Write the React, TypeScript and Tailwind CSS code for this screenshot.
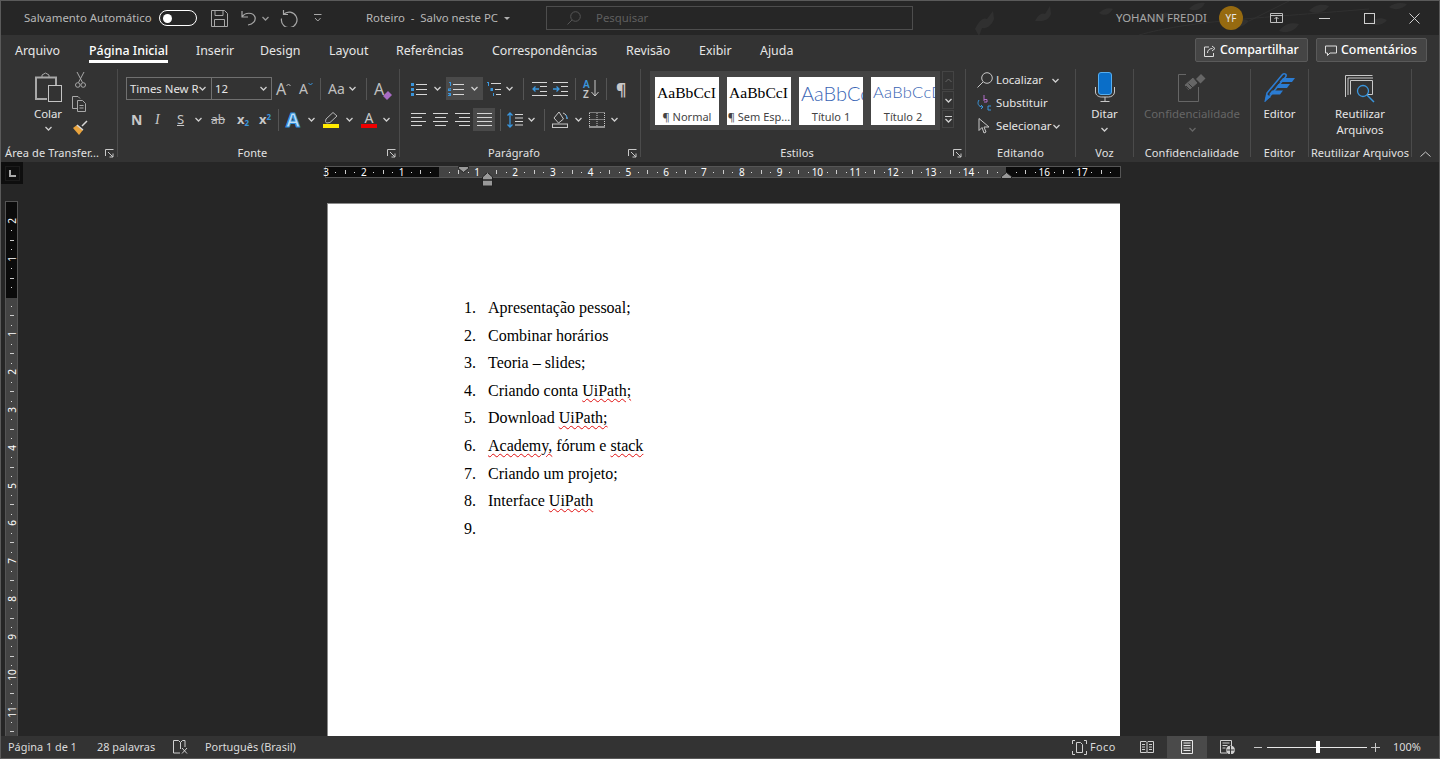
import React from 'react';

const Chev = ({ className = '', color = '#cfcfcf' }: { className?: string; color?: string }) => (
  <svg width="7" height="5" viewBox="0 0 7 5" fill="none" className={`shrink-0 ${className}`}>
    <path d="M.5 1 3.5 4 6.5 1" stroke={color} strokeWidth="1.3" />
  </svg>
);

const Sep = ({ className = '' }: { className?: string }) => <div className={`w-px h-[22px] bg-[#555] shrink-0 ${className}`} />;

const Launcher = () => (
  <svg width="9" height="9" viewBox="0 0 9 9" fill="none" className="shrink-0 mr-[3px]">
    <path d="M.5 7V.5H8.5M3 3 8 8M8 4.5V8H4.5" stroke="#c8c8c8" />
  </svg>
);

const Group = ({
  w,
  label,
  launcher,
  labelClass = 'text-center',
  children,
}: {
  w: string;
  label: string;
  launcher?: boolean;
  labelClass?: string;
  children: React.ReactNode;
}) => (
  <div className={`flex shrink-0 ${w}`}>
    <div className="flex flex-col flex-1 min-w-0 h-[93px]">
      <div className="h-[76px]">{children}</div>
      <div className="h-[16px] flex items-center text-[11px] text-[#e2e2e2] tracking-[0.1px]">
        <div className={`flex-1 whitespace-nowrap ${labelClass}`}>{label}</div>
        {launcher && <Launcher />}
      </div>
    </div>
    <div className="w-px h-[88px] bg-[#4b4b4b]" />
  </div>
);

const Row = ({ className = '', children }: { className?: string; children: React.ReactNode }) => (
  <div className={`flex items-center h-[23px] ${className}`}>{children}</div>
);

const L = '#d6d6d6';
const B = '#3a96dd';

const ListBullet = () => (
  <svg width="16" height="16" viewBox="0 0 16 16" className="shrink-0">
    <path d="M0 2h3v3H0zM0 7h3v3H0zM0 12h3v3H0z" fill={B} />
    <path d="M5 3.5h11M5 8.5h11M5 13.5h11" stroke={L} />
  </svg>
);
const ListNumber = () => (
  <svg width="16" height="16" viewBox="0 0 16 16" className="shrink-0">
    <path d="M1 1h2v4H2V2H1zM0 7h3v1.5H1.2V9H3v1H0V8h1.8v-.4H0zM0 12h3v3H0v-1h2v-.3H1v-.7h1V13H0z" fill={B} />
    <path d="M5 3.5h11M5 8.5h11M5 13.5h11" stroke={L} />
  </svg>
);
const ListMulti = () => (
  <svg width="15" height="16" viewBox="0 0 15 16" className="shrink-0">
    <path d="M1 1h2v4H2V2H1zM4.500 7h2.500v3H4.500z" fill={B} />
    <path d="M7.500 12v3" stroke={B} />
    <path d="M5 2.500h10M9 8.500h6M10 13.500h5" stroke={L} />
  </svg>
);
const Indent = ({ out }: { out?: boolean }) => (
  <svg width="15" height="14" viewBox="0 0 15 14" className="shrink-0">
    <path d="M0 .5h15M0 13.500h15M8 4.500h7M8 9.500h7" stroke={L} />
    <path d={out ? 'M7 7H1M3.500 4.500 1 7l2.500 2.500' : 'M0 7h6M3.500 4.500 6 7 3.500 9.500'} stroke={B} strokeWidth="1.300" fill="none" />
  </svg>
);
const Align = ({ d, w = 15 }: { d: string; w?: number }) => (
  <svg width={w} height="14" viewBox={`0 0 ${w} 14`} className="shrink-0">
    <path d={d} stroke={L} />
  </svg>
);

const Tile = ({ top, label, cls }: { top: string; label: string; cls: string }) => (
  <div className="w-[64px] h-[48px] bg-white flex flex-col overflow-hidden">
    <div className={`h-[32px] flex items-center pl-[2px] whitespace-nowrap overflow-hidden ${cls}`}>{top}</div>
    <div className="text-[11px] leading-[17px] text-[#444] text-center whitespace-nowrap">{label}</div>
  </div>
);

const RULER_H = ['3', '2', '1', '', '1', '2', '3', '4', '5', '6', '7', '8', '9', '10', '11', '12', '13', '14', '', '16', '17'];
const RULER_V = ['2', '1', '', '1', '2', '3', '4', '5', '6', '7', '8', '9', '10', '11', ''];

const HRuler = () => (
  <div className="relative h-[10px] w-[794px] flex mt-[5px] outline outline-1 outline-[#555]">
    <div className="w-[113px] bg-[#0b0b0b]" />
    <div className="w-[567px] bg-[#444]" />
    <div className="flex-1 bg-[#0b0b0b]" />
    <div className="absolute inset-0 flex">
      {RULER_H.map((n, i) => (
        <div key={i} className="w-[37.8px] shrink-0 grid grid-cols-4 items-center h-[10px]">
          <div className="w-0 flex justify-center text-[10px] leading-[10px] text-white">{n}</div>
          <div className="w-px h-px bg-[#ddd]" />
          <div className="w-px h-[4px] bg-[#ccc]" />
          <div className="w-px h-px bg-[#ddd]" />
        </div>
      ))}
    </div>
    <svg width="11" height="7" viewBox="0 0 11 7" className="absolute left-[132px] -top-[1px]">
      <path d="M.5.5h10v2L5.500 6.500.5 2.500z" fill="#999" stroke="#222" />
    </svg>
    <svg width="11" height="15" viewBox="0 0 11 15" className="absolute left-[156px] top-[5px]">
      <path d="M.5 5 5.500.5l5 4.500v3H.5zM.5 8h10v6H.5z" fill="#999" stroke="#222" />
    </svg>
    <svg width="11" height="7" viewBox="0 0 11 7" className="absolute left-[675px] top-[5px]">
      <path d="M.5 6.500v-2l5-4 5 4v2z" fill="#999" stroke="#222" />
    </svg>
  </div>
);

const VRuler = () => (
  <div className="relative w-[11px] h-[534px] mt-[18px] ml-[5px] flex flex-col overflow-hidden outline outline-1 outline-[#555]">
    <div className="h-[96px] bg-[#0b0b0b]" />
    <div className="flex-1 bg-[#444]" />
    <div className="absolute inset-0 flex flex-col pt-[19px]">
      {RULER_V.map((n, i) => (
        <div key={i} className="h-[37.8px] shrink-0 grid grid-rows-4 justify-items-center w-[11px]">
          <div className="h-0 flex items-center text-[10px] text-white -rotate-90">{n}</div>
          <div className="h-px w-px bg-[#ddd]" />
          <div className="h-px w-[4px] bg-[#ccc]" />
          <div className="h-px w-px bg-[#ddd]" />
        </div>
      ))}
    </div>
  </div>
);

const Sq = ({ children }: { children: React.ReactNode }) => (
  <span className="underline decoration-wavy decoration-[#e01010] decoration-1 underline-offset-2">{children}</span>
);

const Item = ({ n, children }: { n: number; children?: React.ReactNode }) => (
  <div className="flex h-[27.6px] leading-[27.6px]">
    <div className="w-[24px]">{n}.</div>
    <div>{children}</div>
  </div>
);

const TABS = [
  { label: 'Arquivo', cls: 'w-[46px]' },
  { label: 'Página Inicial', cls: 'w-[79px] font-medium text-white border-b-[3px] border-white' },
  { label: 'Inserir', cls: 'w-[36px]' },
  { label: 'Design', cls: 'w-[41px]' },
  { label: 'Layout', cls: 'w-[39px]' },
  { label: 'Referências', cls: 'w-[68px]' },
  { label: 'Correspondências', cls: 'w-[106px]' },
  { label: 'Revisão', cls: 'w-[45px]' },
  { label: 'Exibir', cls: 'w-[33px]' },
  { label: 'Ajuda', cls: 'w-[33px]' },
];

export default function App() {
  return (
    <div className="w-[1440px] h-[759px] flex flex-col overflow-hidden border border-[#5a5a5a] bg-[#262626] font-['Noto_Sans',sans-serif] text-[11.4px] text-[#e6e6e6]">
      {/* Title bar */}
      <div className="relative h-[34px] shrink-0 flex items-center pl-[23px] bg-[#262626] text-[#b8b8b8]">
        <svg width="490" height="34" viewBox="0 0 490 34" className="absolute right-0 top-0" fill="#303030">
          <path d="M26 28c4-8 8-12 12-10l6-8 1 8c-2 6-7 10-12 9l-3 8zM86 20c3-6 7-9 10-7l5-8 1 8c-2 5-6 7-10 7z" />
          <g stroke="#303030" fill="none"><path d="M190 34C240 20 300 18 420 8M300 20 340 0" /></g>
          <path d="M200 20c6-8 14-9 20-8-3 7-11 11-20 8zM240 8c4-5 10-7 16-6-3 6-9 9-16 6zM280 24c6-6 14-7 20-4-5 6-13 8-20 4zM330 30c5-7 12-9 20-7-4 7-12 10-20 7zM360 10c4-5 12-8 20-5-4 6-12 9-20 5zM420 22c6-5 12-6 18-3-4 5-11 7-18 3zM150 12c4-4 10-6 14-4-3 5-8 8-14 4zM440 6c5-4 11-5 18-3-4 5-12 7-18 3z" />
        </svg>
        <div className="w-[128px] whitespace-nowrap">Salvamento Automático</div>
        <div className="w-[38px] h-[16px] ml-[7px] rounded-full border-[1.5px] border-white flex items-center pl-[3px]">
          <div className="w-[9px] h-[9px] rounded-full bg-white" />
        </div>
        <svg width="17" height="17" viewBox="0 0 17 17" fill="none" stroke="#a8a8a8" className="ml-[14px]">
          <path d="M.5.5h13l3 3v13H.5zM4 .5v5h8v-5M3.500 16.500v-7h10v7" />
        </svg>
        <svg width="16" height="16" viewBox="0 0 16 16" fill="none" stroke="#a8a8a8" strokeWidth="1.200" className="ml-[13px]">
          <path d="M1 1v6h6M1 7c3-5 11-5 13 0 1 4-2 7-7 8" />
        </svg>
        <Chev className="ml-[5px]" color="#999" />
        <svg width="18" height="18" viewBox="0 0 18 18" fill="none" stroke="#a8a8a8" strokeWidth="1.200" className="ml-[11px]">
          <path d="M3.500 1v4.500H8M3.500 5.500A7.800 7.800 0 1 1 1.500 9.500" />
        </svg>
        <svg width="8" height="8" viewBox="0 0 8 8" fill="none" stroke="#a8a8a8" className="ml-[16px]">
          <path d="M0 .5h7.500M1 4l2.800 3L6.600 4" />
        </svg>
        <div className="ml-[44px] w-[132px] whitespace-nowrap text-[11.4px]">Roteiro&nbsp; -&nbsp; Salvo neste PC</div>
        <svg width="6" height="3" viewBox="0 0 6 3" className="ml-[6px]" fill="#b0b0b0"><path d="M0 0h6L3 3z" /></svg>
        <div className="relative ml-[36px] w-[367px] h-[24px] border border-[#4d4d4d] flex items-center pl-[20px] text-[#5f5f5f]">
          <svg width="14" height="14" viewBox="0 0 14 14" fill="none" stroke="#555">
            <circle cx="8.500" cy="5.500" r="4.800" />
            <path d="M5 9 .5 13.500" />
          </svg>
          <span className="ml-[15px]">Pesquisar</span>
        </div>
        <div className="relative ml-[203px] w-[92px] whitespace-nowrap text-[#a8a8a8]">YOHANN FREDDI</div>
        <div className="relative ml-[11px] w-[24px] h-[24px] rounded-full bg-[#966a10] flex items-center justify-center text-[10px] text-[#e6e6e6]">YF</div>
        <svg width="13" height="11" viewBox="0 0 13 11" fill="none" stroke="#bdbdbd" className="relative ml-[27px]">
          <path d="M.5.500h12v9H.5zM.5 2.500h12M6.500 9V4M4.500 6l2-2 2 2" />
        </svg>
        <div className="relative ml-[36px] w-[11px] h-px bg-[#cfcfcf]" />
        <div className="relative ml-[34px] w-[11px] h-[11px] border border-[#cfcfcf]" />
        <svg width="11" height="11" viewBox="0 0 11 11" stroke="#cfcfcf" className="relative ml-[34px]">
          <path d="M.5.500 10.500 10.500M10.500.500.5 10.500" />
        </svg>
      </div>

      {/* Tabs */}
      <div className="h-[30px] shrink-0 bg-[#333] flex items-center pl-[14px] text-[12.4px]">
        <div className="flex gap-[28px] h-[30px]">
          {TABS.map((t) => (
            <div key={t.label} className={`h-[28px] leading-[31px] whitespace-nowrap ${t.cls}`}>
              {t.label}
            </div>
          ))}
        </div>
        <div className="ml-auto flex gap-[8px] pr-[12px]">
          <div className="w-[113px] h-[24px] pt-px bg-[#454545] border border-[#5a5a5a] rounded-[2px] flex items-center pl-[8px] gap-[4px] font-medium text-white">
            <svg width="12" height="12" viewBox="0 0 12 12" fill="none" stroke="#ddd"><path d="M5 2H.5v9.500h9V8M3.500 8c0-3 2-4.500 5-4.500M8 1l3 2.500L8 6" /></svg>
            Compartilhar
          </div>
          <div className="w-[111px] h-[24px] pt-px bg-[#454545] border border-[#5a5a5a] rounded-[2px] flex items-center pl-[8px] gap-[4px] font-medium text-white">
            <svg width="12" height="12" viewBox="0 0 12 12" fill="none" stroke="#ddd"><path d="M.5 1h11v7H5L2.500 10.500V8h-2z" /></svg>
            Comentários
          </div>
        </div>
      </div>

      {/* Ribbon */}
      <div className="h-[97px] shrink-0 bg-[#333] flex pt-[4px] text-[11.4px]">
        <Group w="w-[117px]" label="Área de Transfer..." launcher labelClass="pl-[4px]">
          <div className="flex pt-[3px] pl-[23px]">
            <div className="w-[48px] flex flex-col items-center">
              <svg width="28" height="31" viewBox="0 0 28 31" fill="none">
                <path d="M13 27H2V5.500h20V13" stroke="#a8a8a8" strokeWidth="2" />
                <path d="M8 5V3l3.500-2L15 3v2" stroke="#a8a8a8" />
                <rect x="14.500" y="13.500" width="13" height="16" stroke="#c4c4c4" fill="#333" />
              </svg>
              <div className="mt-[3px] leading-[16px]">Colar</div>
              <Chev className="mt-[4px]" />
            </div>
            <div className="w-[16px] flex flex-col items-center gap-[8px]">
              <svg width="11" height="16" viewBox="0 0 11 16" fill="none" stroke="#a8a8a8">
                <path d="M2 0 7.500 10.500M9 0 3.500 10.500" />
                <circle cx="2.800" cy="13" r="2.300" />
                <circle cx="8.200" cy="13" r="2.300" />
              </svg>
              <svg width="16" height="16" viewBox="0 0 16 16" fill="none" stroke="#a8a8a8">
                <path d="M5.500 12.500h-5V.5H6L8 2.500M5.500 4.500h5l3 3v8h-8zM7.500 9.500h4M7.500 12h4" />
              </svg>
              <svg width="16" height="16" viewBox="0 0 16 16" fill="none">
                <path d="M5 5 1 8l6 7 4-5z" fill="#e8a33d" />
                <path d="M5 5l6 5M10 6l5-5" stroke="#d8d8d8" strokeWidth="1.500" />
              </svg>
            </div>
          </div>
        </Group>

        <Group w="w-[282px]" label="Fonte" launcher>
          <div className="pt-[8px] pl-[8px] flex flex-col gap-[8px]">
            <Row>
              <div className="w-[86px] h-[23px] border border-[#707070] flex items-center justify-between pl-[3px] pr-[5px]">
                <span className="whitespace-nowrap">Times New R</span>
                <Chev />
              </div>
              <div className="w-[61px] h-[23px] -ml-px border border-[#707070] flex items-center justify-between pl-[3px] pr-[4px]">
                <span>12</span>
                <Chev />
              </div>
              <div className="ml-[4px] w-[16px] flex items-start text-[16px] text-[#c0c0c0]">
                A
                <svg width="5" height="3" viewBox="0 0 5 3" fill="none" stroke="#bbb" className="mt-[6px]"><path d="M.5 3 2.500 1l2 2" /></svg>
              </div>
              <div className="ml-[7px] w-[16px] flex items-start text-[14px] text-[#c0c0c0]">
                A
                <svg width="5" height="3" viewBox="0 0 5 3" fill="none" stroke={B} className="mt-[5px]"><path d="M.5 0l2 2 2-2" /></svg>
              </div>
              <Sep className="ml-[5px]" />
              <span className="ml-[7px] w-[16px] text-[14px] text-[#c0c0c0]">Aa</span>
              <Chev className="ml-[5px]" />
              <Sep className="ml-[10px]" />
              <div className="ml-[7px] w-[18px] flex items-start text-[16px] text-[#c0c0c0] relative">
                A
                <svg width="9" height="9" viewBox="0 0 9 9" className="absolute right-0 bottom-[1px]">
                  <path d="M0 5l5-5 4 4-5 5z" fill="#a86bc4" />
                </svg>
              </div>
            </Row>
            <Row>
              <span className="ml-[5px] w-[11px] text-[14px] font-bold text-[#c8c8c8]">N</span>
              <span className="ml-[13px] w-[8px] text-[14px] italic font-['Liberation_Serif',serif] text-[#c8c8c8]">I</span>
              <span className="ml-[14px] w-[9px] text-[13px] underline text-[#c8c8c8]">S</span>
              <Chev className="ml-[9px]" />
              <span className="ml-[9px] w-[16px] text-[12px] line-through text-[#c0c0c0]">ab</span>
              <span className="ml-[10px] w-[13px] text-[13px] font-bold text-[#c8c8c8] leading-none">
                x<sub className="text-[8px] text-[#3a96dd]">2</sub>
              </span>
              <span className="ml-[9px] w-[13px] text-[13px] font-bold text-[#c8c8c8] leading-none">
                x<sup className="text-[8px] text-[#3a96dd]">2</sup>
              </span>
              <Sep className="ml-[6px]" />
              <span className="ml-[7px] w-[16px] text-[20px] font-bold leading-none text-[#bfe0f7] [-webkit-text-stroke:1px_#2f8fdd]">A</span>
              <Chev className="ml-[6px]" />
              <div className="ml-[8px] w-[16px] flex flex-col items-center">
                <svg width="14" height="12" viewBox="0 0 14 12" fill="none" stroke="#b8b8b8">
                  <path d="M9 .5 13 4 6 10.500 2.500 11l-1-1.500L2 7z" />
                </svg>
                <div className="w-[16px] h-[4px] bg-[#ffea00]" />
              </div>
              <Chev className="ml-[7px]" />
              <div className="ml-[8px] w-[16px] flex flex-col items-center leading-[13px]">
                <span className="text-[14px] text-[#c8c8c8]">A</span>
                <div className="w-[16px] h-[4px] bg-[#f00000]" />
              </div>
              <Chev className="ml-[6px]" />
            </Row>
          </div>
        </Group>

        <Group w="w-[241px]" label="Parágrafo" launcher>
          <div className="pt-[8px] flex flex-col gap-[8px]">
            <Row className="pl-[11px]">
              <ListBullet />
              <Chev className="ml-[7px]" />
              <div className="ml-[5px] w-[37px] h-[23px] bg-[#4a4a4a] flex items-center pl-[2px]">
                <ListNumber />
                <Chev className="ml-[7px]" />
              </div>
              <div className="ml-[3px]"><ListMulti /></div>
              <Chev className="ml-[5px]" />
              <Sep className="ml-[10px]" />
              <div className="ml-[8px]"><Indent out /></div>
              <div className="ml-[6px]"><Indent /></div>
              <Sep className="ml-[7px]" />
              <div className="ml-[7px] w-[17px] flex items-center relative">
                <div className="flex flex-col text-[10px] leading-[10px] font-semibold">
                  <span className="text-[#3a96dd]">A</span>
                  <span className="text-[#c8c8c8]">Z</span>
                </div>
                <svg width="8" height="17" viewBox="0 0 8 17" fill="none" stroke="#c8c8c8" className="ml-[1px]"><path d="M4 0v16M.5 12 4 16l3.500-4" /></svg>
              </div>
              <Sep className="ml-[6px]" />
              <span className="ml-[9px] text-[16px] font-bold text-[#c8c8c8] leading-none">¶</span>
            </Row>
            <Row className="pl-[11px]">
              <Align d="M0 .5h15M0 4.500h11M0 8.500h15M0 12.500h11" />
              <div className="ml-[7px]"><Align d="M0 .5h15M2 4.500h11M0 8.500h15M2 12.500h11" /></div>
              <div className="ml-[7px]"><Align d="M0 .5h15M4 4.500h11M0 8.500h15M4 12.500h11" /></div>
              <div className="ml-[3px] w-[22px] h-[23px] bg-[#4a4a4a] flex items-center justify-center">
                <Align d="M0 .5h15M0 4.500h15M0 8.500h15M0 12.500h15" />
              </div>
              <Sep className="ml-[5px]" />
              <svg width="16" height="16" viewBox="0 0 16 16" fill="none" className="ml-[6px]">
                <path d="M3 1v14M.5 3.500 3 1l2.500 2.500M.5 12.500 3 15l2.500-2.500" stroke={B} strokeWidth="1.300" />
                <path d="M8 2.500h8M8 6h8M8 9.500h8M8 13h8" stroke={L} />
              </svg>
              <Chev className="ml-[5px]" />
              <Sep className="ml-[9px]" />
              <svg width="17" height="17" viewBox="0 0 17 17" fill="none" className="ml-[7px]">
                <path d="M7 1 2 7l4.500 5 5-4L7 1zM11 2c3 1 4 3 4 6" stroke="#c8c8c8" />
                <path d="M14 4l1.500 4" stroke={B} />
                <rect x=".5" y="13" width="15" height="3.500" stroke="#c8c8c8" />
              </svg>
              <Chev className="ml-[6px]" />
              <svg width="16" height="16" viewBox="0 0 16 16" fill="none" stroke="#c8c8c8" className="ml-[7px]">
                <path d="M.5 1v13M15.500 1v13M.5.500h15M8 1v13M.5 7.500h15" strokeDasharray="1 1" />
                <path d="M0 15h16" stroke="#eee" />
              </svg>
              <Chev className="ml-[6px]" />
            </Row>
          </div>
        </Group>

        <Group w="w-[325px]" label="Estilos" launcher>
          <div className="pt-[2px] pl-[9px] flex">
            <div className="w-[290px] h-[59px] bg-[#444] pt-[6px] pl-[5px] flex gap-[8px]">
              <Tile top="AaBbCcI" label="¶ Normal" cls="font-['Liberation_Serif',serif] text-[15.6px] text-black" />
              <Tile top="AaBbCcI" label="¶ Sem Esp..." cls="font-['Liberation_Serif',serif] text-[15.6px] text-black" />
              <Tile top="AaBbCc" label="Título 1" cls="font-['Lato',sans-serif] font-light text-[20px] text-[#3b66b5]" />
              <Tile top="AaBbCcD" label="Título 2" cls="font-['Lato',sans-serif] font-light text-[16.500px] tracking-[0.3px] text-[#3b66b5]" />
            </div>
            <div className="ml-[2px] w-[12px] flex flex-col gap-[1px]">
              <div className="h-[19px] border border-[#444] flex items-center justify-center">
                <svg width="7" height="5" viewBox="0 0 7 5" fill="none" stroke="#666"><path d="M.5 4 3.500 1l3 3" /></svg>
              </div>
              <div className="h-[18px] border border-[#444] flex items-center justify-center"><Chev /></div>
              <div className="h-[18px] border border-[#444] flex flex-col items-center justify-center gap-[1px]">
                <div className="w-[7px] h-px bg-[#cfcfcf]" />
                <Chev />
              </div>
            </div>
          </div>
        </Group>

        <Group w="w-[110px]" label="Editando">
          <div className="pl-[11px] pt-[1px] flex flex-col gap-[3px]">
            <div className="h-[20px] flex items-center">
              <svg width="16" height="16" viewBox="0 0 16 16" fill="none" stroke="#c8c8c8" className="mr-[3px]">
                <circle cx="10" cy="6" r="5.300" />
                <path d="M6 10 .5 15.500" />
              </svg>
              <span className="w-[46px] whitespace-nowrap">Localizar</span>
              <Chev className="ml-[10px]" />
            </div>
            <div className="h-[20px] flex items-center">
              <svg width="15" height="16" viewBox="0 0 15 16" fill="none" className="mr-[4px]">
                <path d="M2 5C0 8 1 12 6 12M4 10l2 2-2 2" stroke={B} />
                <path d="M7 0v6M7 4.500h3v2.500H7" stroke="#b36fc9" />
                <path d="M14 11h-3v4h3" stroke={B} />
              </svg>
              <span className="whitespace-nowrap">Substituir</span>
            </div>
            <div className="h-[20px] flex items-center">
              <svg width="13" height="16" viewBox="0 0 13 16" fill="none" stroke="#c8c8c8" className="ml-[1px] mr-[5px]">
                <path d="M1 .5v12l3-3 2 5.500 2-1-2-5h5z" />
              </svg>
              <span className="w-[54px] whitespace-nowrap">Selecionar</span>
              <Chev className="ml-[3px]" />
            </div>
          </div>
        </Group>

        <Group w="w-[58px]" label="Voz">
          <div className="pt-[3px] flex flex-col items-center">
            <svg width="20" height="30" viewBox="0 0 20 30" fill="none">
              <rect x="3.500" y=".5" width="13" height="22" rx="2.500" fill="#0a6ec8" stroke="#55aef0" />
              <path d="M.5 15v5c0 3 3 5 6 5h7c3 0 6-2 6-5v-5M10 25v4M5.500 29.500h9" stroke="#c8c8c8" />
            </svg>
            <div className="mt-[4px] leading-[16px]">Ditar</div>
            <Chev className="mt-[5px]" />
          </div>
        </Group>

        <Group w="w-[117px]" label="Confidencialidade">
          <div className="pt-[3px] flex flex-col items-center">
            <svg width="28" height="30" viewBox="0 0 28 30" fill="none" stroke="#666">
              <path d="M8 2.500H.5v27h20V15" />
              <path d="M6 13 15 5l5 6-9 8z" fill="#666" stroke="#333" />
              <path d="M18 7l5-5 4.500 4.500-5 5z" fill="#666" stroke="none" />
              <path d="M8 14l6 6M10.500 11.500l6 6" stroke="#333" />
            </svg>
            <div className="mt-[4px] leading-[16px] text-[#666] whitespace-nowrap">Confidencialidade</div>
            <Chev className="mt-[5px]" color="#666" />
          </div>
        </Group>

        <Group w="w-[58px]" label="Editor">
          <div className="pt-[3px] flex flex-col items-center">
            <svg width="31" height="30" viewBox="0 0 31 30" fill="none">
              <path d="M1.500 28.500 3 21 18.500 2.500c1-1 2-1 3-.3.8.7.8 1.700 0 2.800L6 24z" stroke="#2b7cd3" strokeWidth="1.600" />
              <path d="M1 29l1.500-7L7 25z" fill="#2b7cd3" />
              <path d="M19 6h12l-3 4H15.500zM14.500 12H26l-3 4H11.500zM8 18.500h11l-3 4H5z" fill="#2b7cd3" />
            </svg>
            <div className="mt-[4px] leading-[16px]">Editor</div>
          </div>
        </Group>

        <Group w="w-[103px]" label="Reutilizar Arquivos" labelClass="text-center">
          <div className="pt-[6px] flex flex-col items-center">
            <svg width="31" height="28" viewBox="0 0 31 28" fill="none">
              <path d="M.5 22V.5h27M3 20V3h25" stroke="#c8c8c8" />
              <path d="M5.500 19.500v-14h22v14H22" stroke="#c8c8c8" />
              <circle cx="18" cy="16" r="5.500" stroke="#3a96dd" strokeWidth="1.300" />
              <path d="M22 20l7 7" stroke="#3a96dd" strokeWidth="1.500" />
            </svg>
            <div className="mt-[3px] leading-[16px] text-center">Reutilizar<br />Arquivos</div>
          </div>
        </Group>

        <svg width="11" height="6" viewBox="0 0 11 6" fill="none" stroke="#c8c8c8" className="ml-[8px] mt-[82px]">
          <path d="M.5 5.500 5.500 1l5 4.500" />
        </svg>
      </div>

      {/* Document */}
      <div className="flex-1 min-h-0 flex overflow-hidden">
        <div className="w-[325px] shrink-0 flex flex-col">
          <div className="w-[22px] h-[22px] bg-[#0e0e0e] flex items-center justify-center">
            <div className="w-[15px] h-[15px] border border-[#1c1c1c] flex items-center justify-center">
              <svg width="7" height="7" viewBox="0 0 7 7" fill="#a8a8a8"><path d="M0 0h2v5h5v2H0z" /></svg>
            </div>
          </div>
          <VRuler />
        </div>
        <div className="flex flex-col">
          <HRuler />
          <div className="ml-px mt-[26px] w-[793px] flex-1 bg-white border-l border-t border-[#8a8a8a] pt-[90px] pl-[136px] font-['Liberation_Serif',serif] text-[16px] text-black">
            <Item n={1}>Apresentação pessoal;</Item>
            <Item n={2}>Combinar horários</Item>
            <Item n={3}>Teoria – slides;</Item>
            <Item n={4}>Criando conta <Sq>UiPath;</Sq></Item>
            <Item n={5}>Download <Sq>UiPath;</Sq></Item>
            <Item n={6}><Sq>Academy,</Sq> fórum e <Sq>stack</Sq></Item>
            <Item n={7}>Criando um projeto;</Item>
            <Item n={8}>Interface <Sq>UiPath</Sq></Item>
            <Item n={9} />
          </div>
        </div>
      </div>

      {/* Status bar */}
      <div className="h-[22px] shrink-0 bg-[#333] flex items-center pl-[7px] text-[10.9px] text-[#dcdcdc]">
        <span className="w-[70px] whitespace-nowrap">Página 1 de 1</span>
        <span className="ml-[19px] w-[58px] whitespace-nowrap">28 palavras</span>
        <svg width="15" height="14" viewBox="0 0 15 14" fill="none" stroke="#cfcfcf" className="ml-[18px]">
          <path d="M7 13H.5V.5h5l2 2 2-2h2.500V7M7.500 2.500V9M9 8l5 5.500M14 8l-5 5.500" />
        </svg>
        <span className="ml-[17px] whitespace-nowrap">Português (Brasil)</span>

        <div className="ml-auto flex items-center h-[22px]">
          <svg width="15" height="15" viewBox="0 0 15 15" fill="none" stroke="#d0d0d0">
            <path d="M.5 4V.5H3M12 .5h2.500V4M14.500 11v3.500H12M3 14.500H.5V11" />
            <path d="M4.500 2.500h4l2 2v8h-6z" />
          </svg>
          <span className="ml-[3px] w-[26px] tracking-[0.4px]">Foco</span>
          <svg width="14" height="12" viewBox="0 0 14 12" fill="none" stroke="#d0d0d0" className="ml-[24px]">
            <path d="M.5.5h5.500L7 1.500l1-1h5.500v11H8l-1-.5-1 .5H.5zM7 1.500v9.500M2 3.500h3M2 6h3M2 8.500h3M9 3.500h3M9 6h3M9 8.500h3" />
          </svg>
          <div className="ml-[13px] w-[40px] h-[22px] bg-[#4a4a4a] flex items-center justify-center">
            <svg width="12" height="14" viewBox="0 0 12 14" fill="none" stroke="#e8e8e8">
              <path d="M.5.5h11v13H.5zM2.500 3h7M2.500 5.500h7M2.500 8h7M2.500 10.500h7" />
            </svg>
          </div>
          <svg width="15" height="14" viewBox="0 0 15 14" fill="none" stroke="#d0d0d0" className="ml-[13px]">
            <path d="M7 13H.5V.5h11V6M2.500 3h7M2.500 5.500h5M2.500 8h3" />
            <circle cx="10.500" cy="10" r="4" fill="#d0d0d0" />
            <path d="M6.500 10h8M10.500 6v8" stroke="#333" />
          </svg>
          <div className="ml-[19px] w-[8px] h-px bg-[#c8c8c8]" />
          <div className="relative ml-[5px] w-[100px] h-[12px] flex items-center">
            <div className="w-full h-px bg-[#e8e8e8]" />
            <div className="absolute left-[49px] top-0 w-[4px] h-[12px] bg-white" />
          </div>
          <svg width="9" height="9" viewBox="0 0 9 9" stroke="#c8c8c8" className="ml-[4px]"><path d="M0 4.500h9M4.500 0v9" /></svg>
          <span className="ml-[13px] mr-[19px] w-[27px]">100%</span>
        </div>
      </div>
    </div>
  );
}
